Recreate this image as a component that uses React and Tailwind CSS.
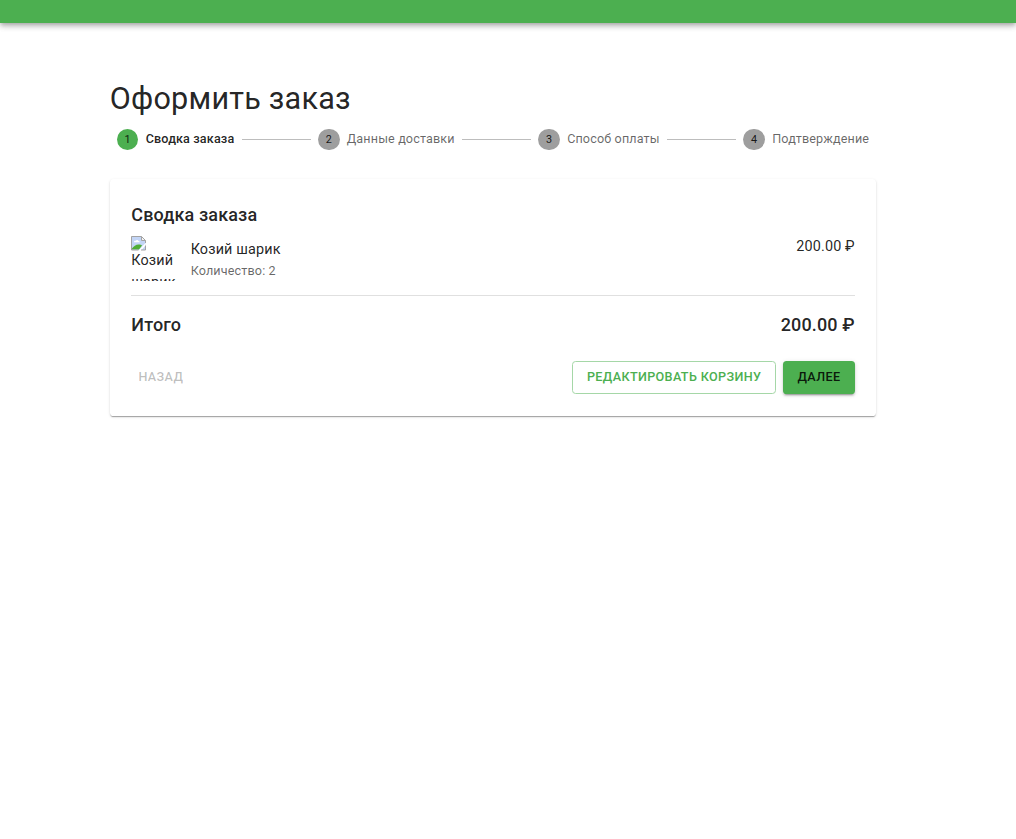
const steps = ["Сводка заказа", "Данные доставки", "Способ оплаты", "Подтверждение"];

function BrokenImage() {
  return (
    <svg viewBox="0 0 15 15" className="block size-[15px]" aria-hidden="true">
      <path d="M.5.5h10l4 4v9.500H.5z" fill="#c3d5f6" />
      <path d="M10.500.5v4h4z" fill="#f4f4f4" />
      <path d="M3 6c0-1 .9-1.500 1.700-1.200C5.200 3.500 7.200 3.700 7.400 5c.9 0 1.300.4 1.300 1.200H3z" fill="#fff" />
      <path d="M1 13.500V12.500c1.500-2.300 4-4 6.500-4 1.500 0 2.800.3 3.500 1L8 13.500z" fill="#4fae36" />
      <path d="m7.500 14.500 7-7.500v2.500L10 14.500z" fill="#fff" />
      <path d="M14.500 7V4.500l-4-4H.5v13.500h7M10.500.5v4h4M14.500 9.500V14H10" fill="none" stroke="#a3a3a3" />
    </svg>
  );
}

function Stepper() {
  return (
    <ol className="flex items-center">
      {steps.map((label, i) => (
        <li key={label} className={i === 0 ? "flex items-center" : "flex flex-auto items-center"}>
          {i > 0 && <span className="h-px flex-auto bg-[#bdbdbd]" />}
          <span className="flex items-center px-[7.2px]">
            <span className={`mr-[7.2px] flex size-[21.600px] items-center justify-center rounded-full pt-px text-[10.800px] leading-none ${i === 0 ? "bg-[#4caf50]" : "bg-[#9e9e9e]"}`}>
              {i + 1}
            </span>
            <span className={`pb-[2px] text-[12.600px] leading-[18px] tracking-[0.01071em] ${i === 0 ? "font-medium" : "text-black/60"}`}>{label}</span>
          </span>
        </li>
      ))}
    </ol>
  );
}

export default function App() {
  return (
    <div className="min-h-screen bg-white font-['Roboto',sans-serif] text-[14.400px] leading-[21.600px] tracking-[0.00938em] text-black/87">
      <header className="h-[23px] bg-[#4caf50] shadow-[0_2px_4px_-1px_rgba(0,0,0,0.2),0_4px_5px_0_rgba(0,0,0,0.14),0_1px_10px_0_rgba(0,0,0,0.12)]" />
      <main className="ml-[109.700px] w-[766.700px] pt-[57px]">
        <h1 className="mb-[11px] text-[30.600px] leading-[37.800px] tracking-[0.00735em]">Оформить заказ</h1>
        <Stepper />
        <section className="mt-[29px] h-[236.500px] rounded-[3.600px] bg-white px-[21.600px] pt-[21.600px] shadow-[0_2px_1px_-1px_rgba(0,0,0,0.2),0_1px_1px_0_rgba(0,0,0,0.14),0_1px_3px_0_rgba(0,0,0,0.12)]">
          <h2 className="mb-[6px] text-[18px] font-medium leading-[28.800px] tracking-[0.0075em]">Сводка заказа</h2>
          <div className="flex items-start justify-between">
            <div className="flex">
              <div className="mr-[14.400px] h-[45px] w-[45px] overflow-hidden">
                <BrokenImage />
                <span className="-mt-px block leading-[22px]">Козий шарик</span>
              </div>
              <div className="pt-[3px]">
                <p>Козий шарик</p>
                <p className="text-[12.600px] leading-[22px] tracking-[0.01071em] text-black/60">Количество: 2</p>
              </div>
            </div>
            <p>200.00 ₽</p>
          </div>
          <hr className="mt-[13px] border-t border-black/12" />
          <div className="mt-[14.600px] flex justify-between text-[18px] font-medium leading-[28.800px] tracking-[0.0075em]">
            <span>Итого</span>
            <span>200.00 ₽</span>
          </div>
          <div className="mt-[21.300px] flex h-[33px] items-stretch text-[12.600px] font-medium leading-[22px] tracking-[0.02857em]">
            <button disabled className="mr-auto px-[7.2px] pb-[2px] text-black/26">НАЗАД</button>
            <button className="mr-[7.2px] rounded-[3.600px] border border-[#a5d7a7] px-[13.600px] pb-[2px] text-[#4caf50]">РЕДАКТИРОВАТЬ КОРЗИНУ</button>
            <button className="rounded-[3.600px] bg-[#4caf50] px-[14.400px] pb-[2px] shadow-[0_3px_1px_-2px_rgba(0,0,0,0.2),0_2px_2px_0_rgba(0,0,0,0.14),0_1px_5px_0_rgba(0,0,0,0.12)]">ДАЛЕЕ</button>
          </div>
        </section>
      </main>
    </div>
  );
}
